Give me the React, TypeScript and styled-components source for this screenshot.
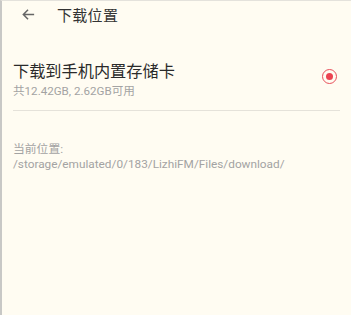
import styled, { createGlobalStyle } from "styled-components";

const GlobalStyle = createGlobalStyle`
  html, body {
    margin: 0;
    padding: 0;
    background: #fffcf2;
  }
  body {
    font-family: Roboto, "Noto Sans CJK SC", sans-serif;
  }
`;

const Page = styled.div`
  width: 351px;
  height: 315px;
  box-sizing: border-box;
  background: #fffcf2;
  border-left: 2px solid #c8c8c6;
  border-top: 1px solid #e4e2dc;
  display: flex;
  flex-direction: column;
`;

const TopBar = styled.div`
  height: 27px;
  display: flex;
  align-items: center;
  padding-left: 19px;
`;

const BackIcon = styled.svg`
  width: 15px;
  height: 15px;
  flex-shrink: 0;
  margin-right: 21px;
  stroke: #666;
  fill: none;
  stroke-width: 1.6;
`;

const Title = styled.div`
  font-size: 15px;
  color: #333;
  letter-spacing: 0.3px;
`;

const OptionRow = styled.div`
  margin: 33px 11px 0 11px;
  padding-bottom: 12px;
  border-bottom: 1px solid #e5e2da;
  display: flex;
  align-items: center;
  justify-content: space-between;
`;

const OptionText = styled.div`
  display: flex;
  flex-direction: column;
  gap: 1px;
`;

const OptionLabel = styled.div`
  font-size: 16.2px;
  color: #2a2a2a;
  line-height: 22px;
`;

const SubText = styled.div`
  font-size: 11.6px;
  color: #a3a3a3;
  line-height: 14px;
`;

const Radio = styled.div<{ $checked: boolean }>`
  width: 13px;
  height: 13px;
  border-radius: 50%;
  border: 1.6px solid #e8505b;
  margin-right: 3px;
  margin-top: -6px;
  display: flex;
  align-items: center;
  justify-content: center;
  &::after {
    content: "";
    width: 7px;
    height: 7px;
    border-radius: 50%;
    background: ${({ $checked }) => ($checked ? "#eb4452" : "transparent")};
  }
`;

const PathBlock = styled.div`
  margin: 31px 11px 0 11px;
  display: flex;
  flex-direction: column;
  gap: 1px;
`;

const PathLine = styled.div`
  font-size: 11.8px;
  color: #a3a3a3;
  line-height: 14px;
`;

export default function App() {
  return (
    <>
      <GlobalStyle />
      <Page>
        <TopBar>
          <BackIcon viewBox="0 0 16 16">
            <path d="M14 8H2.5M7.5 3L2.5 8l5 5" />
          </BackIcon>
          <Title>下载位置</Title>
        </TopBar>
        <OptionRow>
          <OptionText>
            <OptionLabel>下载到手机内置存储卡</OptionLabel>
            <SubText>共12.42GB, 2.62GB可用</SubText>
          </OptionText>
          <Radio $checked />
        </OptionRow>
        <PathBlock>
          <PathLine>当前位置:</PathLine>
          <PathLine>/storage/emulated/0/183/LizhiFM/Files/download/</PathLine>
        </PathBlock>
      </Page>
    </>
  );
}
